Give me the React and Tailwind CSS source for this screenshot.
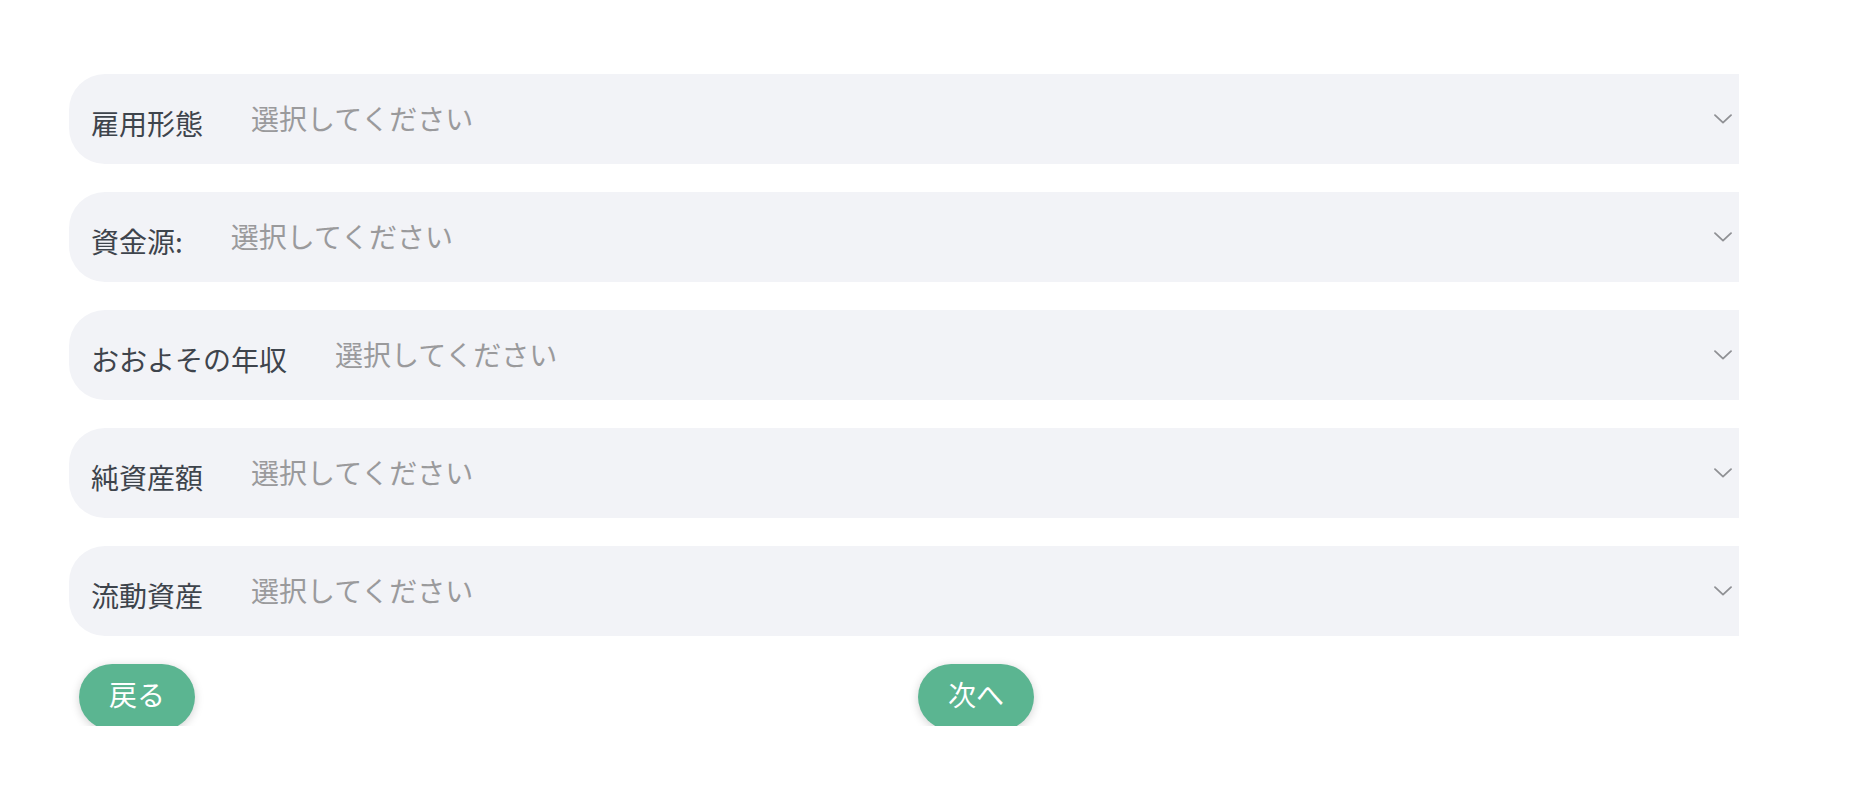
const fields = [
   { label: "雇用形態" },
   { label: "資金源:" },
   { label: "おおよその年収" },
   { label: "純資産額" },
   { label: "流動資産" },
];

function Chevron() {
   return (
      <svg width="18" height="10" viewBox="0 0 18 10" fill="none" className="shrink-0">
         <path d="M1 1.2L9 8.6L17 1.2" stroke="#8f9094" strokeWidth="1.8" strokeLinecap="round" strokeLinejoin="round" />
      </svg>
   );
}

function SelectRow({ label }) {
   return (
      <div className="flex items-center w-[1670px] h-[90px] bg-[#f2f3f7] rounded-l-[36px] pl-[22px] pr-[7px]">
         <span className="text-[28px] leading-none text-[#3e444c] mt-[8px] whitespace-nowrap">
            {label}
         </span>
         <span className="text-[28px] leading-none text-[#9a9a9c] ml-[48px] mb-[2px] whitespace-nowrap">
            選択してください
         </span>
         <div className="flex-1" />
         <Chevron />
      </div>
   );
}

function PillButton({ children, className }) {
   return (
      <button
         className={
            "w-[116px] h-[66px] rounded-full bg-[#5bb591] text-white text-[28px] leading-none flex justify-center items-center pb-[6px] shadow-[0_2px_10px_rgba(0,0,0,0.18)] " +
            className
         }
      >
         {children}
      </button>
   );
}

export default function App() {
   return (
      <div
         className="w-[1850px] h-[806px] bg-white pl-[69px] pt-[74px]"
         style={{ fontFamily: '"Noto Sans CJK JP", "Noto Sans", sans-serif' }}
      >
         <div className="flex flex-col gap-[28px]">
            {fields.map((f) => (
               <SelectRow key={f.label} label={f.label} />
            ))}
         </div>
         <div className="flex items-start h-[70px] overflow-hidden mt-[20px] pt-[8px] pl-[10px]">
            <PillButton>戻る</PillButton>
            <PillButton className="ml-[723px]">次へ</PillButton>
         </div>
      </div>
   );
}
